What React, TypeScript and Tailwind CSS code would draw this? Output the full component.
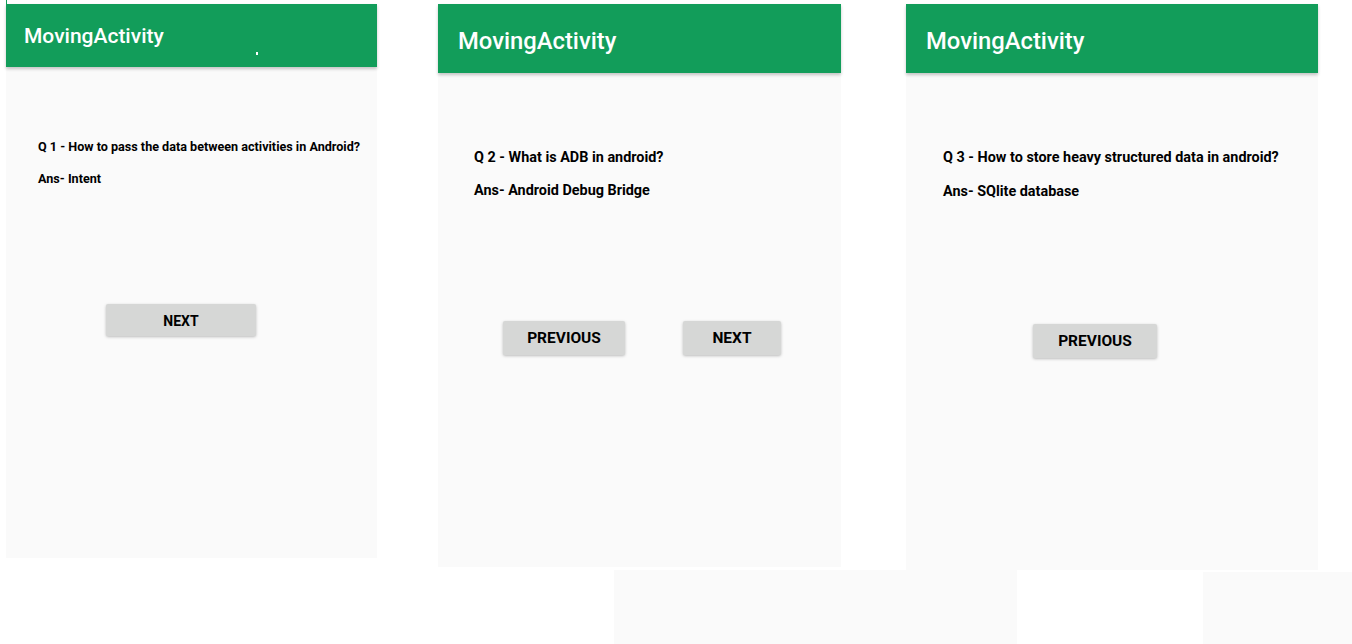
const font = { fontFamily: "Roboto, 'Noto Sans', sans-serif" };

const Header = ({ tall, mark }: { tall?: boolean; mark?: boolean }) => (
  <div
    className={`relative flex items-center bg-[#129d5a] font-medium text-white shadow-[0_2px_3px_rgba(0,0,0,0.22)] ${
      tall ? "h-[69px] pl-5 pt-[7px] text-[23.8px]" : "h-[63px] pl-[18px] pt-[1px] text-[21px]"
    }`}
  >
    <span className="leading-none">MovingActivity</span>
    {mark && <span className="absolute left-[250px] top-[48px] h-[3px] w-[2px] bg-white" />}
  </div>
);

const Btn = ({ label, w, h, size }: { label: string; w: string; h: string; size: string }) => (
  <div
    className={`flex items-center justify-center rounded-[2px] bg-[#d6d7d6] pt-[2px] font-bold text-black shadow-[0_1px_3px_rgba(0,0,0,0.25)] ${w} ${h} ${size}`}
  >
    {label}
  </div>
);

export default function App() {
  return (
    <div className="h-[644px] w-[1352px] overflow-hidden bg-white" style={font}>
      <div className="relative flex h-[570px] items-start pt-[4px]">
        <span className="absolute left-[6px] top-0 h-[4px] w-[1px] bg-[#129d5a]" />

        {/* screen 1 */}
        <div className="ml-[6px] flex h-[554px] w-[371px] flex-col bg-[#fafafa]">
          <Header mark />
          <div className="flex flex-col pl-8 pt-[72px]">
            <p className="whitespace-nowrap text-[12.6px] font-bold leading-4 text-black">
              Q 1 - How to pass the data between activities in Android?
            </p>
            <p className="mt-4 text-[12.6px] font-bold leading-4 text-black">Ans- Intent</p>
            <div className="mt-[117px] pl-[68px]">
              <Btn label="NEXT" w="w-[150px]" h="h-[32px]" size="text-[14px]" />
            </div>
          </div>
        </div>

        {/* screen 2 */}
        <div className="ml-[61px] flex h-[563px] w-[403px] flex-col bg-[#fafafa]">
          <Header tall />
          <div className="flex flex-col pl-9 pt-[76px]">
            <p className="text-[14.4px] font-bold leading-[18px] text-black">Q 2 - What is ADB in android?</p>
            <p className="mt-[15px] text-[14.4px] font-bold leading-[18px] text-black">Ans- Android Debug Bridge</p>
            <div className="mt-[121px] flex items-center gap-[58px] pl-[29px]">
              <Btn label="PREVIOUS" w="w-[122px]" h="h-[34px]" size="text-[15.5px]" />
              <Btn label="NEXT" w="w-[98px]" h="h-[34px]" size="text-[15.5px]" />
            </div>
          </div>
        </div>

        {/* screen 3 */}
        <div className="ml-[65px] flex h-[566px] w-[412px] flex-col bg-[#fafafa]">
          <Header tall />
          <div className="flex flex-col pl-[37px] pt-[76px]">
            <p className="whitespace-nowrap text-[14.4px] font-bold leading-[18px] text-black">
              Q 3 - How to store heavy structured data in android?
            </p>
            <p className="mt-4 text-[14.4px] font-bold leading-[18px] text-black">Ans- SQlite database</p>
            <div className="mt-[123px] pl-[90px]">
              <Btn label="PREVIOUS" w="w-[124px]" h="h-[34px]" size="text-[15.5px]" />
            </div>
          </div>
        </div>
      </div>

      {/* leftover strips at the bottom */}
      <div className="flex items-start">
        <div className="ml-[614px] h-[74px] w-[403px] bg-[#fafafa]" />
        <div className="ml-[186px] mt-[2px] h-[72px] w-[149px] bg-[#fafafa]" />
      </div>
    </div>
  );
}
